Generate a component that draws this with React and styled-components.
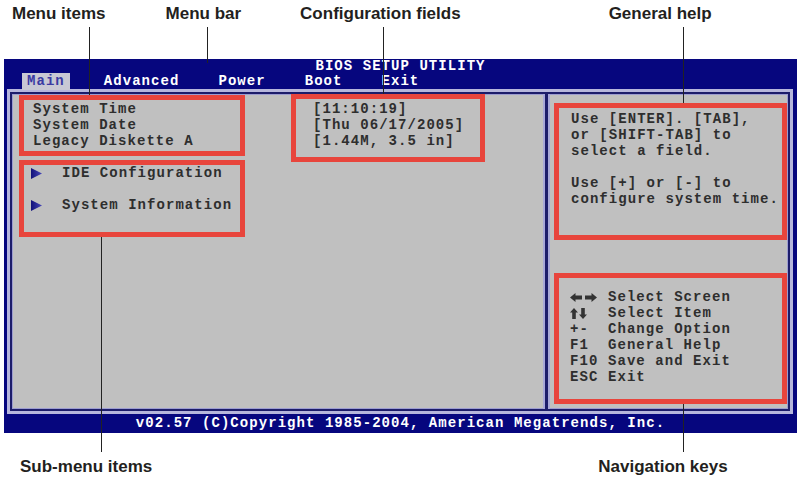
import React from "react";
import styled, { createGlobalStyle } from "styled-components";

const GlobalStyle = createGlobalStyle`
  body {
    margin: 0;
    background: #fff;
  }
`;

const mono = `"Liberation Mono", "Courier New", monospace`;
const navy = "#06067e";
const red = "#e8453c";

const helpText = `Use [ENTER]. [TAB],
or [SHIFT-TAB] to
select a field.

Use [+] or [-] to
configure system time.`;

const navKeys = [
  { key: "lr", label: "Select Screen" },
  { key: "ud", label: "Select Item" },
  { key: "+-", label: "Change Option" },
  { key: "F1", label: "General Help" },
  { key: "F10", label: "Save and Exit" },
  { key: "ESC", label: "Exit" },
];

const ArrowsLR = () => (
  <svg width="28" height="9" viewBox="0 0 28 9">
    <polygon points="0,4.5 5.5,0 5.5,2.5 12,2.5 12,6.5 5.5,6.5 5.5,9" fill="#333" />
    <polygon points="27,4.5 21.5,0 21.5,2.5 15,2.5 15,6.5 21.5,6.5 21.5,9" fill="#333" />
  </svg>
);

const ArrowsUD = () => (
  <svg width="18" height="11" viewBox="0 0 18 11">
    <polygon points="4,0 8,4.5 5.8,4.5 5.8,11 2.2,11 2.2,4.5 0,4.5" fill="#333" />
    <polygon points="13,11 17,6.5 14.8,6.5 14.8,0 11.2,0 11.2,6.5 9,6.5" fill="#333" />
  </svg>
);

const Pointer = () => (
  <svg width="11" height="11" viewBox="0 0 11 11">
    <defs>
      <linearGradient id="ptr" x1="0" y1="0" x2="1" y2="0">
        <stop offset="0" stopColor="#12127a" />
        <stop offset="1" stopColor="#4848b8" />
      </linearGradient>
    </defs>
    <polygon points="0,0 11,5.5 0,11" fill="url(#ptr)" />
  </svg>
);

const App = () => {
  return (
    <Page>
      <GlobalStyle />
      <LabelRow $top={4} $height={55}>
        <Label $gap={12}>Menu items</Label>
        <Label $gap={60}>Menu bar</Label>
        <Label $gap={59}>Configuration fields</Label>
        <Label $gap={148}>General help</Label>
      </LabelRow>

      <Screen>
        <Title>BIOS SETUP UTILITY</Title>
        <MenuBar>
          <MenuItem $active>Main</MenuItem>
          <MenuItem>Advanced</MenuItem>
          <MenuItem>Power</MenuItem>
          <MenuItem>Boot</MenuItem>
          <MenuItem>Exit</MenuItem>
        </MenuBar>

        <Frame>
          <Inner>
            <LeftPane>
              <ItemsColumn>
                <Callout $width={226} $pad="1px 0 2px 9px">
                  <Line>System Time</Line>
                  <Line>System Date</Line>
                  <Line>Legacy Diskette A</Line>
                </Callout>
                <Callout $width={226} $pad="0 0 19px 7px">
                  <SubItem>
                    <Pointer />
                    IDE Configuration
                  </SubItem>
                  <SubItem $spaced>
                    <Pointer />
                    System Information
                  </SubItem>
                </Callout>
              </ItemsColumn>
              <FieldsBox $width={194} $pad="2px 0 8px 17px">
                <Line>[11:10:19]</Line>
                <Line>[Thu 06/17/2005]</Line>
                <Line>[1.44M, 3.5 in]</Line>
              </FieldsBox>
            </LeftPane>

            <Divider />

            <RightPane>
              <Callout $width={233} $pad="3px 0 28px 12px">
                <HelpText>{helpText}</HelpText>
              </Callout>
              <Callout $width={233} $pad="11px 0 14px 11px">
                {navKeys.map((k) => (
                  <KeyRow key={k.key}>
                    <KeyName>
                      {k.key === "lr" ? <ArrowsLR /> : k.key === "ud" ? <ArrowsUD /> : k.key}
                    </KeyName>
                    <span>{k.label}</span>
                  </KeyRow>
                ))}
              </Callout>
            </RightPane>
          </Inner>
        </Frame>

        <Footer>v02.57 (C)Copyright 1985-2004, American Megatrends, Inc.</Footer>
      </Screen>

      <LabelRow $top={24} $height={23}>
        <Label $gap={20}>Sub-menu items</Label>
        <Label $gap={446}>Navigation keys</Label>
      </LabelRow>

      <Leader $x={89} $top={27} $height={68} />
      <Leader $x={207} $top={27} $height={36} />
      <Leader $x={383} $top={27} $height={67} />
      <Leader $x={683} $top={27} $height={76} />
      <Leader $x={101} $top={237} $height={215} />
      <Leader $x={683} $top={404} $height={48} />
    </Page>
  );
};

export default App;

const Page = styled.div`
  position: relative;
  width: 797px;
  height: 480px;
  overflow: hidden;
  background: #fff;
`;

const LabelRow = styled.div`
  display: flex;
  padding-top: ${({ $top }) => $top}px;
  height: ${({ $height }) => $height}px;
`;

const Label = styled.div`
  margin-left: ${({ $gap }) => $gap}px;
  font-family: "Liberation Sans", Arial, sans-serif;
  font-weight: bold;
  font-size: 17px;
  line-height: 20px;
  color: #231f20;
  white-space: nowrap;
`;

const Leader = styled.div`
  position: absolute;
  left: ${({ $x }) => $x}px;
  top: ${({ $top }) => $top}px;
  width: 1px;
  height: ${({ $height }) => $height}px;
  background: #222;
  z-index: 2;
`;

const Screen = styled.div`
  margin-left: 4px;
  width: 793px;
  height: 374px;
  background: ${navy};
  display: flex;
  flex-direction: column;
  font-family: ${mono};
  font-weight: bold;
  font-size: 14px;
  letter-spacing: 1.05px;
`;

const Title = styled.div`
  height: 15px;
  line-height: 16px;
  margin-top: -1px;
  text-align: center;
  color: #fff;
`;

const MenuBar = styled.div`
  display: flex;
  gap: 29px;
  height: 16px;
  padding-left: 18px;
`;

const MenuItem = styled.div`
  padding: 0 5px;
  line-height: 16px;
  height: ${({ $active }) => ($active ? 17 : 16)}px;
  color: ${({ $active }) => ($active ? "#3a3aa2" : "#fff")};
  background: ${({ $active }) => ($active ? "#c8c8d4" : "transparent")};
  position: relative;
  z-index: 1;
`;

const Frame = styled.div`
  height: 325px;
  margin: 0 4px 0 3px;
  padding: 3px;
  box-sizing: border-box;
  background: #b6b6dc;
`;

const Inner = styled.div`
  display: flex;
  height: 100%;
  box-sizing: border-box;
  border: 2px solid #1c1c6a;
  box-shadow: inset 0 0 0 1px #9c9cd0;
  background: #c0c0c0;
  color: #2e2e2e;
`;

const LeftPane = styled.div`
  width: 531px;
  display: flex;
  align-items: flex-start;
  padding: 1px 0 0 7px;
  box-sizing: border-box;
`;

const ItemsColumn = styled.div`
  display: flex;
  flex-direction: column;
  gap: 4px;
`;

const Callout = styled.div`
  width: ${({ $width }) => $width}px;
  box-sizing: border-box;
  border: 5px solid ${red};
  padding: ${({ $pad }) => $pad};
`;

const FieldsBox = styled(Callout)`
  margin: -1px 0 0 46px;
`;

const Line = styled.div`
  line-height: 16px;
  white-space: pre;
`;

const SubItem = styled.div`
  display: flex;
  align-items: center;
  gap: 20px;
  height: 16px;
  margin-top: ${({ $spaced }) => ($spaced ? 16 : 0)}px;
  white-space: pre;
`;

const Divider = styled.div`
  width: 3px;
  background: #1c1c6a;
  border-left: 2px solid #a8a8d8;
  border-right: 2px solid #a8a8d8;
`;

const RightPane = styled.div`
  flex: 1;
  display: flex;
  flex-direction: column;
  justify-content: space-between;
  padding: 9px 1px 5px 4px;
`;

const HelpText = styled.div`
  line-height: 16px;
  white-space: pre;
`;

const KeyRow = styled.div`
  display: flex;
  align-items: center;
  height: 16px;
  white-space: pre;
`;

const KeyName = styled.span`
  width: 38px;
  display: flex;
  align-items: center;
`;

const Footer = styled.div`
  height: 18px;
  line-height: 18px;
  text-align: center;
  color: #fff;
`;
